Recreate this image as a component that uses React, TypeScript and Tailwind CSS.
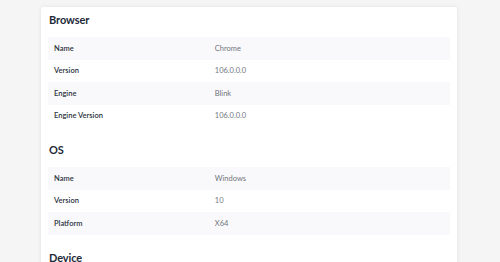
const sections: { title: string; rows: [string, string][] }[] = [
  {
    title: "Browser",
    rows: [
      ["Name", "Chrome"],
      ["Version", "106.0.0.0"],
      ["Engine", "Blink"],
      ["Engine Version", "106.0.0.0"],
    ],
  },
  {
    title: "OS",
    rows: [
      ["Name", "Windows"],
      ["Version", "10"],
      ["Platform", "X64"],
    ],
  },
  // device rows sit below the fold, only the heading shows
  { title: "Device", rows: [] },
];

export default function App() {
  return (
    <div
      className="h-[262px] overflow-hidden bg-[#f5f5f5] pt-[7px]"
      style={{ fontFamily: "Lato, 'Noto Sans', sans-serif" }}
    >
      <div className="ml-[41px] w-[416px] rounded-[3px] bg-white px-[7px] pt-[5px] pb-4 shadow-[0_0_4px_rgba(0,0,0,0.08)]">
        {sections.map((section, i) => (
          <section key={section.title} className={i > 0 ? "mt-[15px]" : ""}>
            <h2 className="mb-[9px] ml-px h-4 text-[11px] font-bold leading-4 tracking-[-0.1px] text-[#1e2a38]">
              {section.title}
            </h2>
            {section.rows.length > 0 && (
              <table className="w-full border-collapse text-[7.5px]">
                <tbody>
                  {section.rows.map(([label, value], r) => (
                    <tr
                      key={label}
                      className={`h-[22.5px] ${r % 2 === 0 ? "bg-[#f9f9fb]" : "bg-white"}`}
                    >
                      <td className="w-2/5 pl-[6px] font-semibold text-[#2a313c]">
                        {label}
                      </td>
                      <td className="pl-[6px] text-[#71757d]">{value}</td>
                    </tr>
                  ))}
                </tbody>
              </table>
            )}
          </section>
        ))}
      </div>
    </div>
  );
}
